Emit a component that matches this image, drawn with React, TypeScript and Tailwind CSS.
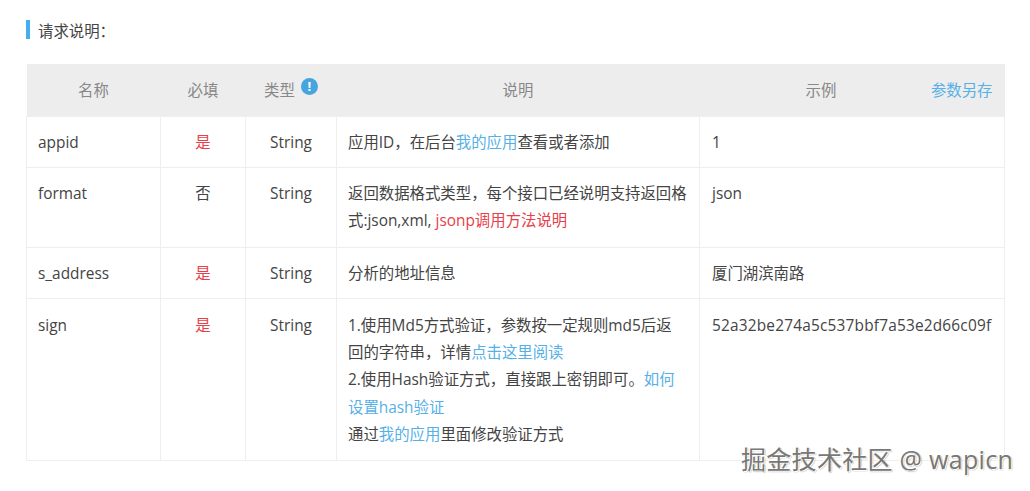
const font = { fontFamily: '"Open Sans", "Noto Sans CJK SC", sans-serif' };

function Link({ children }: { children: React.ReactNode }) {
  return <span className="text-[#56b0e8]">{children}</span>;
}
function Red({ children }: { children: React.ReactNode }) {
  return <span className="text-[#e8404a]">{children}</span>;
}

const th = "font-normal text-[#888] text-[15.4px] text-center align-middle";
const td = "border border-[#eeeeee] pl-[11px] pr-[11px] pt-3 pb-0 align-top text-[15.4px] leading-[27.4px] text-[#444]";
const tdLast = "border border-[#eeeeee] pl-[12px] pr-[11px] pt-3 pb-0 align-top text-[15.4px] leading-[27.4px] text-[#444]";
const tdSign = "border border-[#eeeeee] pl-[11px] pr-[11px] pt-[13px] pb-0 align-top text-[15.4px] leading-[27.4px] text-[#444]";
const tdSignLast = "border border-[#eeeeee] pl-[12px] pr-[11px] pt-[13px] pb-0 align-top text-[15.4px] leading-[27.4px] text-[#444] tracking-[0.2px]";

export default function App() {
  return (
    <div className="relative w-[1030px] h-[491px] overflow-hidden bg-white" style={font}>
      <div className="pl-[26px] pt-[20px]">
        <div className="flex items-center h-[19px] border-l-4 border-[#45aef0] pl-2 text-[15.4px] text-[#444]"><span className="translate-y-[2px]">请求说明：</span></div>
      </div>
      <table className="table-fixed border-collapse ml-[26px] mt-[25px] w-[978px]">
        <colgroup>
          <col className="w-[134px]" />
          <col className="w-[85px]" />
          <col className="w-[91px]" />
          <col className="w-[363px]" />
          <col className="w-[305px]" />
        </colgroup>
        <thead>
          <tr className="h-[52px] bg-[#eeeded]">
            <th className={th}><span className="inline-block translate-y-[1px]">名称</span></th>
            <th className={th}><span className="inline-block translate-y-[1px]">必填</span></th>
            <th className={th}>
              <span className="inline-flex items-start gap-[6px] translate-y-[1px]">
                类型
                <span className="flex items-center justify-center w-[17px] h-[17px] rounded-full bg-[#45a5e0] text-white text-[13px] font-bold leading-none -mt-[1px]">!</span>
              </span>
            </th>
            <th className={th}><span className="inline-block translate-y-[1px]">说明</span></th>
            <th className={th}>
              <div className="relative pr-[62px] translate-y-[1px]">
                示例
                <span className="absolute right-3 top-1/2 -translate-y-1/2 text-[#56b0e8]">参数另存</span>
              </div>
            </th>
          </tr>
        </thead>
        <tbody>
          <tr className="h-[51px]">
            <td className={td}>appid</td>
            <td className={td + " text-center"}><Red>是</Red></td>
            <td className={td + " text-center"}>String</td>
            <td className={td}>应用ID，在后台<Link>我的应用</Link>查看或者添加</td>
            <td className={tdLast}>1</td>
          </tr>
          <tr className="h-[80px]">
            <td className={td}>format</td>
            <td className={td + " text-center"}>否</td>
            <td className={td + " text-center"}>String</td>
            <td className={td}>返回数据格式类型，每个接口已经说明支持返回格式:json,xml, <Red>jsonp调用方法说明</Red></td>
            <td className={tdLast}>json</td>
          </tr>
          <tr className="h-[51px]">
            <td className={td}>s_address</td>
            <td className={td + " text-center"}><Red>是</Red></td>
            <td className={td + " text-center"}>String</td>
            <td className={td}>分析的地址信息</td>
            <td className={tdLast}>厦门湖滨南路</td>
          </tr>
          <tr className="h-[162px]">
            <td className={tdSign}>sign</td>
            <td className={tdSign + " text-center"}><Red>是</Red></td>
            <td className={tdSign + " text-center"}>String</td>
            <td className={tdSign}>
              1.使用Md5方式验证，参数按一定规则md5后返
              <br />
              回的字符串，详情<Link>点击这里阅读</Link>
              <br />
              2.使用Hash验证方式，直接跟上密钥即可。<Link>如何设置hash验证</Link>
              <br />
              通过<Link>我的应用</Link>里面修改验证方式
            </td>
            <td className={tdSignLast}>52a32be274a5c537bbf7a53e2d66c09f</td>
          </tr>
        </tbody>
      </table>
      <div
        className="absolute left-[741px] top-[443px] text-[25px] leading-[32px] tracking-[0.3px] text-[#777] whitespace-nowrap"
        style={{ textShadow: "1px 1px 0 #fff, -1px -1px 0 #fff, 1px 1px 1px #555" }}
      >
        掘金技术社区 @ wapicn
      </div>
    </div>
  );
}
